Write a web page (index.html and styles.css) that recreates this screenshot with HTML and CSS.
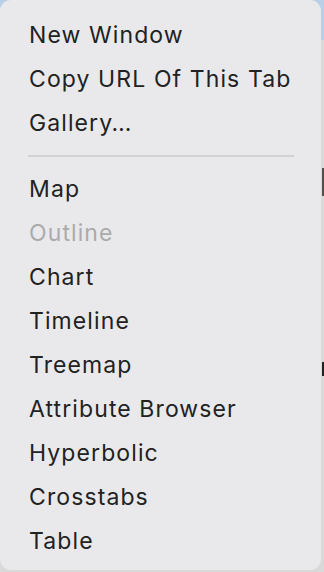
FILE: index.html
```html
<!DOCTYPE html>
<html>
<head>
<meta charset="utf-8">
<link rel="stylesheet" href="styles.css">
</head>
<body>
<div class="backdrop">
  <div class="bg-top"></div>
  <div class="bg-side">
    <span class="mark m1"></span>
    <span class="mark m2"></span>
  </div>
</div>
<div class="menu">
  <div class="item">New Window</div>
  <div class="item">Copy URL Of This Tab</div>
  <div class="item">Gallery…</div>
  <div class="sep"></div>
  <div class="item">Map</div>
  <div class="item disabled">Outline</div>
  <div class="item">Chart</div>
  <div class="item">Timeline</div>
  <div class="item">Treemap</div>
  <div class="item">Attribute Browser</div>
  <div class="item">Hyperbolic</div>
  <div class="item">Crosstabs</div>
  <div class="item">Table</div>
</div>
</body>
</html>
```

FILE: styles.css
```css
html, body {
  margin: 0;
  padding: 0;
  width: 324px;
  height: 572px;
  overflow: hidden;
  background: #dadada;
}
body {
  position: relative;
  font-family: Inter, "Noto Sans", sans-serif;
}
.backdrop {
  position: absolute;
  inset: 0;
  display: flex;
  flex-direction: column;
}
.bg-top {
  height: 40px;
  background: #b9cfe8;
}
.bg-side {
  flex: 1;
  position: relative;
  background: #d9d9d9;
}
.mark {
  position: absolute;
  right: 0;
  width: 2px;
  background: #444;
}
.m1 { top: 128px; height: 28px; background: #555048; }
.m2 { top: 322px; height: 14px; background: #222; }
.menu {
  position: relative;
  width: 321px;
  height: 570px;
  box-sizing: border-box;
  background: #e9e9eb;
  border-radius: 11px;
  padding: 13px 0 6px 0;
  display: flex;
  flex-direction: column;
}
.item {
  height: 44px;
  line-height: 44px;
  padding-left: 29px;
  font-size: 23px;
  letter-spacing: 1.1px;
  color: #222222;
  white-space: nowrap;
}
.item.disabled {
  color: #ababab;
}
.sep {
  height: 22px;
  display: flex;
  align-items: center;
  padding: 0 27px 0 28px;
}
.sep::before {
  content: "";
  flex: 1;
  height: 2px;
  background: #d2d2d4;
}
```
